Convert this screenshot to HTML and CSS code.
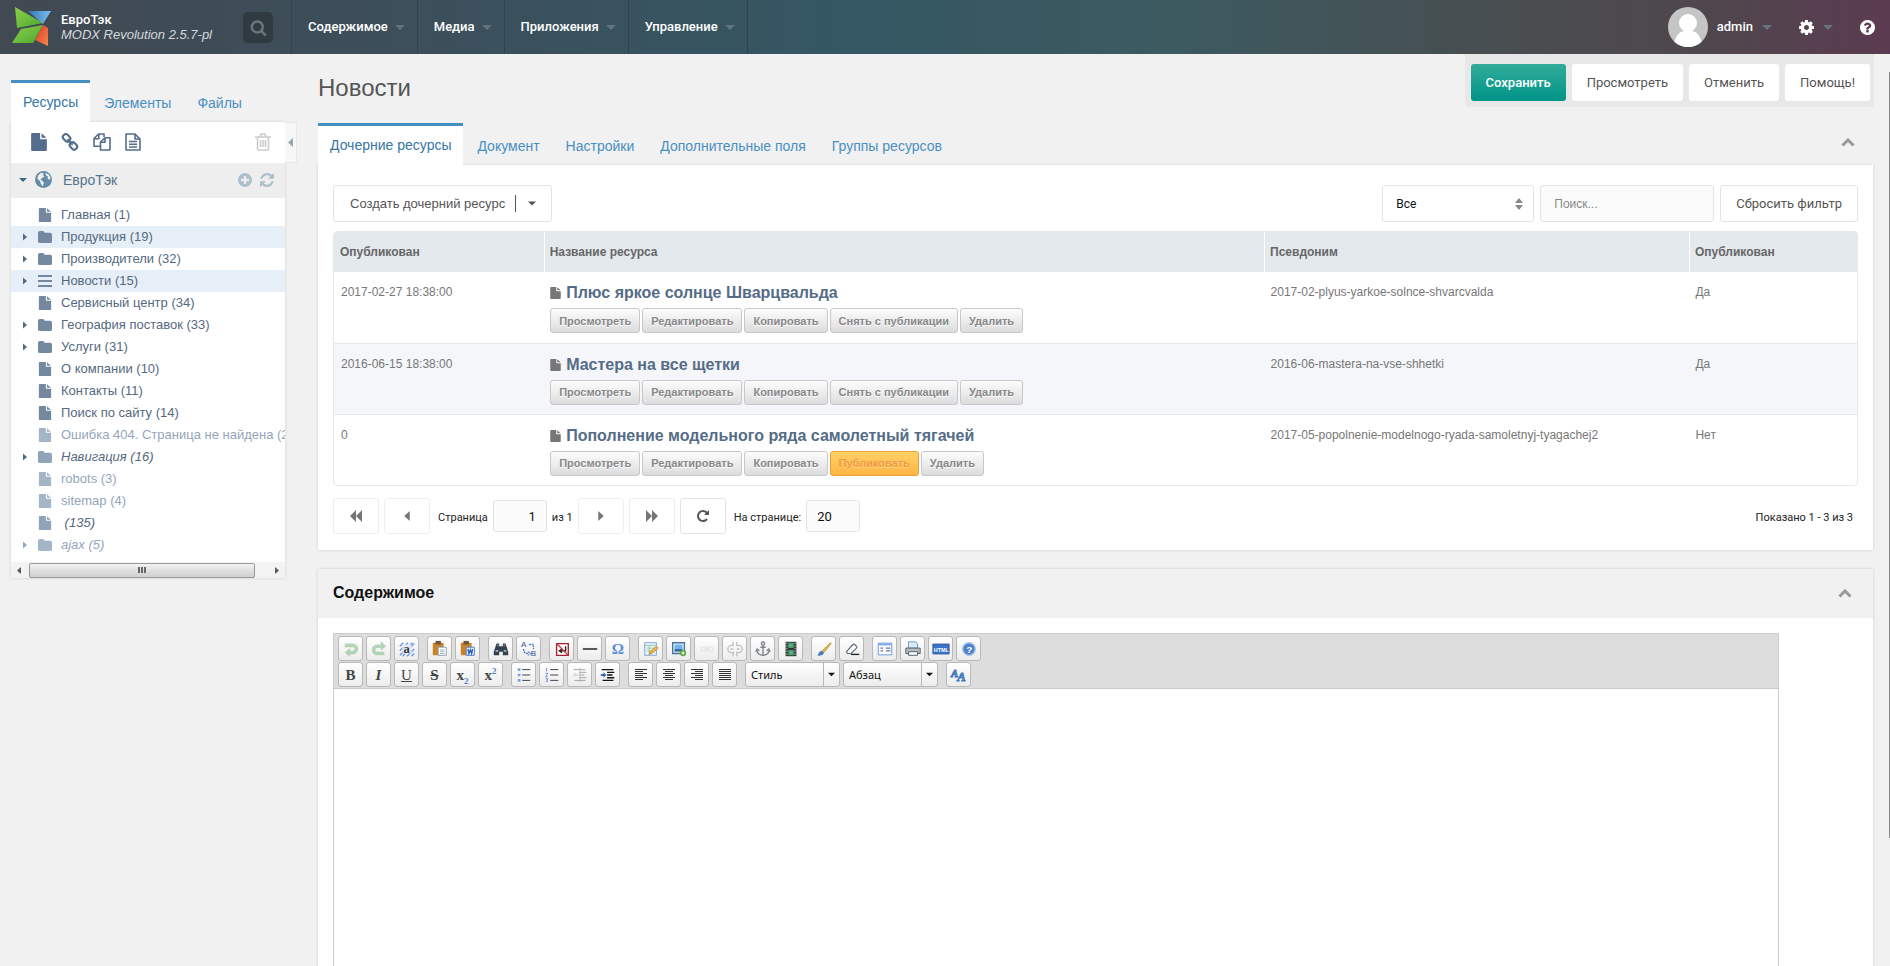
FILE: index.html
```html
<!DOCTYPE html>
<html lang="ru">
<head>
<meta charset="utf-8">
<title>Новости — ЕвроТэк</title>
<link rel="stylesheet" href="styles.css">
</head>
<body>
<svg class="sprite" aria-hidden="true">
  <symbol id="i-search" viewBox="0 0 1792 1792"><path d="M1216 832q0-185-131.5-316.5t-316.5-131.5-316.5 131.5-131.5 316.5 131.5 316.5 316.5 131.5 316.5-131.5 131.5-316.5zm512 832q0 52-38 90t-90 38q-54 0-90-38l-343-342q-179 124-399 124-143 0-273.5-55.5t-225-150-150-225-55.5-273.5 55.5-273.5 150-225 225-150 273.5-55.5 273.5 55.5 225 150 150 225 55.5 273.5q0 220-124 399l343 343q37 37 37 90z"/></symbol>
  <symbol id="i-cog" viewBox="128 128 1536 1536"><path d="M1152 896q0-106-75-181t-181-75-181 75-75 181 75 181 181 75 181-75 75-181zm512-109v222q0 12-8 23t-20 13l-185 28q-19 54-39 91 35 50 107 138 10 12 10 25t-9 23q-27 37-99 108t-94 71q-12 0-26-9l-138-108q-44 23-91 38-16 136-29 186-7 28-36 28h-222q-14 0-24.5-8.5t-11.5-21.5l-28-184q-49-16-90-37l-141 107q-10 9-25 9-14 0-25-11-126-114-165-168-7-10-7-23 0-12 8-23 15-21 51-66.5t54-70.5q-27-50-41-99l-183-27q-13-2-21-12.5t-8-23.5v-222q0-12 8-23t19-13l186-28q14-46 39-92-40-57-107-138-10-12-10-24 0-10 9-23 26-36 98.5-107.5t94.5-71.5q13 0 26 10l138 107q44-23 91-38 16-136 29-186 7-28 36-28h222q14 0 24.5 8.5t11.5 21.5l28 184q49 16 90 37l142-107q9-9 24-9 13 0 25 10 129 119 165 170 7 8 7 22 0 12-8 23-15 21-51 66.5t-54 70.5q26 50 41 98l183 28q13 2 21 12.5t8 23.5z"/></symbol>
  <symbol id="i-question" viewBox="128 128 1536 1536"><path d="M1024 1376v-192q0-14-9-23t-23-9h-192q-14 0-23 9t-9 23v192q0 14 9 23t23 9h192q14 0 23-9t9-23zm256-672q0-88-55.5-163t-138.5-116-170-41q-243 0-371 213-15 24 8 42l132 100q7 6 19 6 16 0 25-12 53-68 86-92 34-24 86-24 48 0 85.5 26t37.5 59q0 38-20 61t-68 45q-63 28-115.5 86.5t-52.5 125.5v36q0 14 9 23t23 9h192q14 0 23-9t9-23q0-19 21.5-49.5t54.5-49.5q32-18 49-28.5t46-35 44.5-48 28-60.5 12.5-81zm384 192q0 209-103 385.5t-279.5 279.5-385.5 103-385.5-103-279.5-279.5-103-385.5 103-385.5 279.5-279.5 385.5-103 385.5 103 279.5 279.5 103 385.5z"/></symbol>
  <symbol id="i-refresh" viewBox="128 128 1536 1536"><path d="M1639 1056q0 5-1 7-64 268-268 434.5t-478 166.5q-146 0-282.5-55t-243.5-157l-129 129q-19 19-45 19t-45-19-19-45v-448q0-26 19-45t45-19h448q26 0 45 19t19 45-19 45l-137 137q71 66 161 102t187 36q134 0 250-65t186-179q11-17 53-117 8-23 30-23h192q13 0 22.5 9.5t9.5 22.5zm25-800v448q0 26-19 45t-45 19h-448q-26 0-45-19t-19-45 19-45l138-138q-148-137-349-137-134 0-250 65t-186 179q-11 17-53 117-8 23-30 23h-199q-13 0-22.5-9.5t-9.5-22.5v-7q65-268 270-434.5t480-166.5q146 0 284 55.5t245 156.5l130-129q19-19 45-19t45 19 19 45z"/></symbol>
  <symbol id="i-plus" viewBox="128 128 1536 1536"><path d="M1344 960v-128q0-26-19-45t-45-19h-256v-256q0-26-19-45t-45-19h-128q-26 0-45 19t-19 45v256h-256q-26 0-45 19t-19 45v128q0 26 19 45t45 19h256v256q0 26 19 45t45 19h128q26 0 45-19t19-45v-256h256q26 0 45-19t19-45zm320-64q0 209-103 385.5t-279.5 279.5-385.5 103-385.5-103-279.5-279.5-103-385.5 103-385.5 279.5-279.5 385.5-103 385.5 103 279.5 279.5 103 385.5z"/></symbol>
  <symbol id="i-repeat" viewBox="128 128 1536 1536"><path d="M1664 256v448q0 26-19 45t-45 19h-448q-42 0-59-40-17-39 14-69l138-138q-148-137-349-137-104 0-198.5 40.5t-163.5 109.5-109.5 163.5-40.5 198.5 40.5 198.5 109.5 163.5 163.5 109.5 198.5 40.5q119 0 225-52t179-147q7-10 23-12 15 0 25 9l137 138q9 8 9.5 20.5t-7.5 22.5q-109 132-264 204.5t-327 72.5q-156 0-298-61t-245-164-164-245-61-298 61-298 164-245 245-164 298-61q147 0 284.5 55.5t244.5 156.5l130-129q29-31 70-14 39 17 39 59z"/></symbol>
  <symbol id="i-file" viewBox="0 0 14 16"><path d="M0 1a1 1 0 0 1 1-1h7v5.500h6V15a1 1 0 0 1-1 1H1a1 1 0 0 1-1-1zM9.300 0.200 13.700 4.300H9.300z"/></symbol>
  <symbol id="i-folder" viewBox="0 0 15 13"><path d="M0 2a2 2 0 0 1 2-2h3a2 2 0 0 1 2 2h6a2 2 0 0 1 2 2v7a2 2 0 0 1-2 2H2a2 2 0 0 1-2-2z"/></symbol>
  <symbol id="i-bars" viewBox="0 0 14 12"><path d="M0 0h14v2H0zM0 5h14v2H0zM0 10h14v2H0z"/></symbol>
  <symbol id="i-link" viewBox="0 0 17 17"><g fill="none" stroke="currentColor" stroke-width="2"><rect x="1.500" y="1.800" width="7.500" height="5.500" rx="2.600" transform="rotate(45 5.200 4.600)"/><rect x="8" y="9.500" width="7.500" height="5.500" rx="2.600" transform="rotate(45 11.800 12.200)"/><path d="M6 6l5 5"/></g></symbol>
  <symbol id="i-copy" viewBox="0 0 18 18"><g fill="none" stroke="currentColor" stroke-width="1.600" stroke-linejoin="round"><path d="M7 13.200H1V5.500L5.500 1H11v3M5.800 1v4.800H1M17 4.800V17H7.500V9L12 4.800zM12 4.800V9.200H7.500"/></g></symbol>
  <symbol id="i-filetext" viewBox="0 0 16 18"><g fill="none" stroke="currentColor" stroke-width="1.600" stroke-linejoin="round"><path d="M1 1h9l5 5v11H1zM10 1v5h5M4 8.500h8M4 11.200h8M4 14h8"/></g></symbol>
  <symbol id="i-trash" viewBox="0 0 16 18"><g fill="none" stroke="currentColor" stroke-width="1.600"><path d="M0 4h16M5 4l1-3h4l1 3M2.500 4v12q0 1 1 1h9q1 0 1-1V4M5.500 7v7M8 7v7M10.500 7v7"/></g></symbol>
  <symbol id="i-globe" viewBox="0 0 17 17"><circle cx="8.500" cy="8.500" r="8.500"/><path class="land" d="M3 4.500 6 1.800 9 2.500 8 4.500 9.500 5.500 7 7 5.500 8.500 7.500 10 9 12 7.500 15.500 6 13 5 10 2.500 8zM10.500 1.800 14 3.800 15.500 6.500 14.500 9 12.500 7.500 13 5.500 11 4.500z"/></symbol>
  <symbol id="i-up" viewBox="0 0 14 9"><path d="M1.500 7.500 7 2l5.500 5.500" fill="none" stroke="currentColor" stroke-width="3"/></symbol>
  <symbol id="i-down" viewBox="0 0 10 5"><path d="M0 0h10L5 5z"/></symbol>
  <symbol id="i-right" viewBox="0 0 5 9"><path d="M0 0v9l5-4.500z"/></symbol>
  <symbol id="i-left" viewBox="0 0 5 9"><path d="M5 0v9L0 4.500z"/></symbol>
  <symbol id="i-first" viewBox="0 0 12 12"><path d="M6 0v12L0 6zM12 0v12L6 6z"/></symbol>
  <symbol id="i-last" viewBox="0 0 12 12"><path d="M6 0v12l6-6zM0 0v12l6-6z"/></symbol>
  <symbol id="i-updown" viewBox="0 0 8 12"><path d="M0 5 4 0l4 5zM0 7l4 5 4-5z"/></symbol>
</svg>

<header class="topbar">
  <div class="brand">
    <svg class="logo" viewBox="0 0 40 40" aria-label="MODX">
      <defs>
        <linearGradient id="lg1" x1="0" y1="0" x2="1" y2="1"><stop offset="0" stop-color="#8fd04c"/><stop offset="1" stop-color="#4ba82e"/></linearGradient>
        <linearGradient id="lg2" x1="0" y1="0" x2="1" y2="0"><stop offset="0" stop-color="#2f74b8"/><stop offset="1" stop-color="#7cc0ee"/></linearGradient>
        <linearGradient id="lg3" x1="0" y1="0" x2="1" y2="1"><stop offset="0" stop-color="#d9372a"/><stop offset="1" stop-color="#f58a4b"/></linearGradient>
      </defs>
      <path d="M3 0 31 16 5 21z" fill="url(#lg1)"/><path d="M16 4H39L31 17z" fill="url(#lg2)"/>
      <path d="M9 22 31 18 21 36H0z" fill="url(#lg1)"/><path d="M31 18 36 21V39L23 33z" fill="url(#lg3)"/>
    </svg>
    <div class="brand-text"><strong>ЕвроТэк</strong><em>MODX Revolution 2.5.7-pl</em></div>
    <button class="search-btn" aria-label="Поиск"><svg><use href="#i-search"/></svg></button>
  </div>
  <nav class="menu">
    <a href="#">Содержимое <svg class="caret"><use href="#i-down"/></svg></a>
    <a href="#">Медиа <svg class="caret"><use href="#i-down"/></svg></a>
    <a href="#">Приложения <svg class="caret"><use href="#i-down"/></svg></a>
    <a href="#">Управление <svg class="caret"><use href="#i-down"/></svg></a>
  </nav>
  <nav class="user">
    <a href="#" class="profile"><svg class="avatar" viewBox="0 0 40 40"><defs><clipPath id="av"><circle cx="20" cy="20" r="20"/></clipPath></defs><g clip-path="url(#av)"><path fill="#c5c5c5" d="M0 0h40v40H0z"/><g fill="#fff"><circle cx="20" cy="16" r="9"/><path d="M5 42q2-16 10-18h10q8 2 10 18z"/></g></g></svg>admin <svg class="caret"><use href="#i-down"/></svg></a>
    <a href="#" class="settings" aria-label="Настройки"><svg class="ico15"><use href="#i-cog"/></svg><svg class="caret"><use href="#i-down"/></svg></a>
    <a href="#" aria-label="Справка"><svg class="ico15"><use href="#i-question"/></svg></a>
  </nav>
</header>

<div class="page">
  <aside class="sidebar">
    <nav class="tabs side-tabs"><a href="#" class="tab active">Ресурсы</a><a href="#" class="tab">Элементы</a><a href="#" class="tab">Файлы</a></nav>
    <div class="side-panel">
      <button class="collapse" aria-label="Свернуть"><svg><use href="#i-left"/></svg></button>
      <div class="side-tools">
        <button aria-label="Документ"><svg class="w16"><use href="#i-file"/></svg></button>
        <button aria-label="Ссылка"><svg class="w18"><use href="#i-link"/></svg></button>
        <button aria-label="Копия"><svg class="w18"><use href="#i-copy"/></svg></button>
        <button aria-label="Файл"><svg class="w16"><use href="#i-filetext"/></svg></button>
        <button class="trash" aria-label="Корзина"><svg class="w16"><use href="#i-trash"/></svg></button>
      </div>
      <div class="root"><svg class="caret"><use href="#i-down"/></svg><svg class="globe"><use href="#i-globe"/></svg><span>ЕвроТэк</span><button aria-label="Добавить"><svg><use href="#i-plus"/></svg></button><button aria-label="Обновить"><svg><use href="#i-refresh"/></svg></button></div>
      <ul class="tree">
        <li><i></i><svg><use href="#i-file"/></svg><a href="#">Главная (1)</a></li>
        <li class="sel"><i><svg><use href="#i-right"/></svg></i><svg><use href="#i-folder"/></svg><a href="#">Продукция (19)</a></li>
        <li><i><svg><use href="#i-right"/></svg></i><svg><use href="#i-folder"/></svg><a href="#">Производители (32)</a></li>
        <li class="sel"><i><svg><use href="#i-right"/></svg></i><svg><use href="#i-bars"/></svg><a href="#">Новости (15)</a></li>
        <li><i></i><svg><use href="#i-file"/></svg><a href="#">Сервисный центр (34)</a></li>
        <li><i><svg><use href="#i-right"/></svg></i><svg><use href="#i-folder"/></svg><a href="#">География поставок (33)</a></li>
        <li><i><svg><use href="#i-right"/></svg></i><svg><use href="#i-folder"/></svg><a href="#">Услуги (31)</a></li>
        <li><i></i><svg><use href="#i-file"/></svg><a href="#">О компании (10)</a></li>
        <li><i></i><svg><use href="#i-file"/></svg><a href="#">Контакты (11)</a></li>
        <li><i></i><svg><use href="#i-file"/></svg><a href="#">Поиск по сайту (14)</a></li>
        <li class="off"><i></i><svg><use href="#i-file"/></svg><a href="#">Ошибка 404. Страница не найдена (2)</a></li>
        <li class="hid"><i><svg><use href="#i-right"/></svg></i><svg><use href="#i-folder"/></svg><a href="#">Навигация (16)</a></li>
        <li class="off"><i></i><svg><use href="#i-file"/></svg><a href="#">robots (3)</a></li>
        <li class="off"><i></i><svg><use href="#i-file"/></svg><a href="#">sitemap (4)</a></li>
        <li class="hid"><i></i><svg><use href="#i-file"/></svg><a href="#">&nbsp;(135)</a></li>
        <li class="off hid"><i><svg><use href="#i-right"/></svg></i><svg><use href="#i-folder"/></svg><a href="#">ajax (5)</a></li>
      </ul>
      <div class="hscroll"><svg><use href="#i-left"/></svg><div class="track"><div class="thumb"><span></span></div></div><svg><use href="#i-right"/></svg></div>
    </div>
  </aside>

  <main class="main">
    <div class="main-head">
      <h1>Новости</h1>
      <div class="actions"><button class="btn primary">Сохранить</button><button class="btn">Просмотреть</button><button class="btn">Отменить</button><button class="btn">Помощь!</button></div>
    </div>
    <nav class="tabs main-tabs"><a href="#" class="tab active">Дочерние ресурсы</a><a href="#" class="tab">Документ</a><a href="#" class="tab">Настройки</a><a href="#" class="tab">Дополнительные поля</a><a href="#" class="tab">Группы ресурсов</a><button class="fold" aria-label="Свернуть"><svg><use href="#i-up"/></svg></button></nav>
    <section class="panel grid-panel">
      <div class="filters">
        <button class="btn line create">Создать дочерний ресурс<svg><use href="#i-down"/></svg></button>
        <div class="combo"><select aria-label="Фильтр"><option>Все</option></select><svg><use href="#i-updown"/></svg></div>
        <input class="field find" type="text" placeholder="Поиск..." aria-label="Поиск">
        <button class="btn line reset">Сбросить фильтр</button>
      </div>
      <div class="grid">
      <table>
        <colgroup><col class="c1"><col class="c2"><col class="c3"><col class="c4"></colgroup>
        <thead><tr><th>Опубликован</th><th>Название ресурса</th><th>Псевдоним</th><th>Опубликован</th></tr></thead>
        <tbody>
          <tr><td>2017-02-27 18:38:00</td><td><a href="#" class="name"><svg><use href="#i-file"/></svg>Плюс яркое солнце Шварцвальда</a><div class="row-btns"><button>Просмотреть</button><button>Редактировать</button><button>Копировать</button><button>Снять с публикации</button><button>Удалить</button></div></td><td>2017-02-plyus-yarkoe-solnce-shvarcvalda</td><td>Да</td></tr>
          <tr><td>2016-06-15 18:38:00</td><td><a href="#" class="name"><svg><use href="#i-file"/></svg>Мастера на все щетки</a><div class="row-btns"><button>Просмотреть</button><button>Редактировать</button><button>Копировать</button><button>Снять с публикации</button><button>Удалить</button></div></td><td>2016-06-mastera-na-vse-shhetki</td><td>Да</td></tr>
          <tr><td>0</td><td><a href="#" class="name"><svg><use href="#i-file"/></svg>Пополнение модельного ряда самолетный тягачей</a><div class="row-btns"><button>Просмотреть</button><button>Редактировать</button><button>Копировать</button><button class="publish">Публиковать</button><button>Удалить</button></div></td><td>2017-05-popolnenie-modelnogo-ryada-samoletnyj-tyagachej2</td><td>Нет</td></tr>
        </tbody>
      </table>
      </div>
      <div class="paging">
        <button class="pg" disabled aria-label="Первая"><svg class="p12"><use href="#i-first"/></svg></button>
        <button class="pg" disabled aria-label="Предыдущая"><svg class="p9"><use href="#i-left"/></svg></button>
        <label for="pn">Страница</label><input id="pn" class="field num right" type="text" value="1"><span>из 1</span>
        <button class="pg" disabled aria-label="Следующая"><svg class="p9"><use href="#i-right"/></svg></button>
        <button class="pg" disabled aria-label="Последняя"><svg class="p12"><use href="#i-last"/></svg></button>
        <button class="pg" aria-label="Обновить"><svg class="p12"><use href="#i-repeat"/></svg></button>
        <label for="ps" class="per">На странице:</label><input id="ps" class="field num" type="text" value="20">
        <span class="shown">Показано 1 - 3 из 3</span>
      </div>
    </section>

    <section class="panel content-panel">
      <div class="panel-head"><h2>Содержимое</h2><button class="fold" aria-label="Свернуть"><svg><use href="#i-up"/></svg></button></div>
      <div class="editor">
        <div class="ed-tools">
          <div class="ed-row">
            <div class="grp">
              <button class="dim" aria-label="Отменить"><svg viewBox="0 0 20 20"><path d="M3 6h9a4 4 0 0 1 0 8H8" fill="none" stroke="#7fba87" stroke-width="4"/><path d="M9 9v10l-6-5z" fill="#7fba87"/></svg></button>
              <button class="dim" aria-label="Повторить"><svg viewBox="0 0 20 20"><path d="M13 7H8a3.500 3.500 0 0 0 0 8h8" fill="none" stroke="#7fba87" stroke-width="4"/><path d="M12 1v11l6-5z" fill="#7fba87"/></svg></button>
              <button aria-label="Выделить всё"><svg viewBox="0 0 20 20"><path d="M2 7l4-4M2 12l9-9M2 17l5-5M13 6l3-3M5 18l3-3M10 18l8-8M15 18l3-3M14 8l4-4" stroke="#6c92e6" stroke-width="1.500"/><path d="M5 5h10v10H5z" fill="#e3ebfb"/><text x="6" y="14" class="gl" font-size="14">a</text></svg></button>
            </div>
            <div class="grp">
              <button aria-label="Вставить"><svg viewBox="0 0 20 20"><rect x="2" y="3" width="12" height="14" rx="1" fill="#c98328"/><rect x="5" y="1" width="6" height="4" fill="#6d5740"/><path d="M8 8h9v9H8z" fill="#fff" stroke="#8c9bb5"/><path d="M10 11h5M10 13h5M10 15h5" stroke="#9aa"/></svg></button>
              <button aria-label="Вставить из Word"><svg viewBox="0 0 20 20"><rect x="2" y="3" width="12" height="14" rx="1" fill="#c98328"/><rect x="5" y="1" width="6" height="4" fill="#6d5740"/><path d="M8 8h9v9H8z" fill="#e5efff" stroke="#4977c6"/><path d="M10 10l1 5 1.500-4 1.500 4 1-5" fill="none" stroke="#2c60bd" stroke-width="1.500"/></svg></button>
            </div>
            <div class="grp">
              <button aria-label="Найти"><svg viewBox="0 0 20 20"><path d="M5 4h3v3h4V4h3l3 9v4h-6v-4H8v4H2v-4z" fill="#35414c"/><path d="M4 12h3M13 12h3M6 6h1M13 6h1" stroke="#9cb2c4" stroke-width="2"/></svg></button>
              <button aria-label="Заменить"><svg viewBox="0 0 20 20"><text x="1" y="8" font-size="9" class="gs">A</text><text x="12" y="18" font-size="9" class="gs">B</text><path d="M4 10c0 5 3 5 6 5M10 5h5v5M9 13l3 2-3 2" fill="none" stroke="#4b76ce" stroke-width="1.500" stroke-dasharray="2 1"/></svg></button>
            </div>
            <div class="grp">
              <button aria-label="Перенос"><svg viewBox="0 0 20 20"><path d="M4 4h13v13H4z" fill="#fff" stroke="#a32430" stroke-width="1.500"/><path d="M14 7v5H8M10 10l-3 2 3 2" fill="none" stroke="#222" stroke-width="1.500"/><path d="M4 4l13 13" stroke="#c23b48" stroke-width="1.500"/></svg></button>
              <button aria-label="Линия"><svg viewBox="0 0 20 20"><path d="M2 10h16" stroke="#111" stroke-width="1.500"/></svg></button>
              <button aria-label="Символ"><svg viewBox="0 0 20 20"><text x="3" y="16" font-size="17" class="om">Ω</text></svg></button>
            </div>
            <div class="grp">
              <button aria-label="Стили"><svg viewBox="0 0 20 20"><path d="M3 3h13v14H3z" fill="#e9f2fc" stroke="#7ba2d4"/><path d="M3 6h13M5 9h9M5 12h7M8 6v10" stroke="#9fc39f"/><path d="M8 16l1-3 7-6 2 2-7 6z" fill="#f2b74c" stroke="#a56f1c" stroke-width=".7"/></svg></button>
              <button aria-label="Картинка"><svg viewBox="0 0 20 20"><path d="M3 3h13v12H3z" fill="#eef4fb" stroke="#47719f" stroke-width="1.500"/><path d="M5 5h9v5H5z" fill="#73b4ee"/><path d="M5 10h9v3H5z" fill="#3d6f9d"/><circle cx="14.500" cy="14.500" r="3.500" fill="#57a63f"/><path d="M12.500 14.500h4M14.500 12.500v4" stroke="#fff"/></svg></button>
              <button class="dim" aria-label="Ссылка"><svg viewBox="0 0 20 20"><path d="M4 8h5v4H4zM11 8h5v4h-5zM7 10h6" fill="none" stroke="#ddd" stroke-width="1.500"/></svg></button>
              <button class="dim" aria-label="Убрать ссылку"><svg viewBox="0 0 20 20"><path d="M8 6H6a4 4 0 0 0 0 8h2M12 6h2a4 4 0 0 1 0 8h-2M8 2v5M12 13v5M12 2v5M8 13v5M5 10h3M12 10h3" fill="none" stroke="#999" stroke-width="1.500"/></svg></button>
              <button aria-label="Якорь"><svg viewBox="0 0 20 20"><circle cx="10" cy="4" r="1.800" fill="none" stroke="#7d838a" stroke-width="1.500"/><path d="M10 6v11M7 8h6M3 11c1 5 4 6 7 6s6-1 7-6M2 13l1.500-3L6 12M18 13l-1.500-3L14 12" fill="none" stroke="#7d838a" stroke-width="1.500"/></svg></button>
              <button aria-label="Видео"><svg viewBox="0 0 20 20"><path d="M4 2h12v16H4z" fill="#30363a"/><path d="M7 3h6v6H7zM7 11h6v6H7z" fill="#4aa75c"/><path d="M8 5h3v2H8zM9 13h3v2H9z" fill="#5db1dd"/><path d="M5.500 3v14M14.500 3v14" stroke="#ddd" stroke-dasharray="1.500 1.500"/></svg></button>
            </div>
            <div class="grp">
              <button aria-label="Очистить"><svg viewBox="0 0 20 20"><path d="M8 12 17 3l1 1-8 10z" fill="#e6bb55" stroke="#a88330" stroke-width=".7"/><path d="M2 17c2 0 2-4 5-5l3 2c0 3-4 4-8 3z" fill="#4a7db5"/></svg></button>
              <button aria-label="Ластик"><svg viewBox="0 0 20 20"><path d="M4 13 11 5q1-1 2 0l2 2q1 1 0 2l-6 6H5z" fill="#fff" stroke="#5d6b80" stroke-width="1.300"/><path d="M9 16h9" stroke="#222" stroke-width="1.500"/></svg></button>
            </div>
            <div class="grp">
              <button aria-label="Поля"><svg viewBox="0 0 20 20"><path d="M2.500 3.500h15v13h-15z" fill="#fff" stroke="#5d8ed4"/><path d="M3 5h14" stroke="#7aa8e8" stroke-width="2"/><path d="M5 9h3M5 12h3M11 9h5M11 12h5" stroke="#5d78a0" stroke-width="1.500"/></svg></button>
              <button aria-label="Печать"><svg viewBox="0 0 20 20"><path d="M5 9V2h8l2 2v5z" fill="#d8e9fb" stroke="#6d93c0"/><path d="M2 9h16v6H2z" fill="#b7bcc4" stroke="#50565d"/><path d="M5 13h10v4H5z" fill="#fff" stroke="#50565d"/></svg></button>
              <button aria-label="HTML"><svg viewBox="0 0 20 20"><path d="M1 4.500h18v11H1z" fill="#3c74c8" stroke="#2756a0"/><text x="2" y="13" class="ht" font-size="6">HTML</text></svg></button>
              <button aria-label="Помощь"><svg viewBox="0 0 20 20"><circle cx="10" cy="10" r="7" fill="#4d84cc" stroke="#aac6ea" stroke-width="1.500"/><text x="7" y="14" font-size="11" class="hq">?</text></svg></button>
            </div>
          </div>
          <div class="ed-row">
            <div class="grp letters">
              <button><b>B</b></button><button><i>I</i></button><button class="thin"><u>U</u></button><button><s>S</s></button><button>x<sub>2</sub></button><button>x<sup>2</sup></button>
            </div>
            <div class="grp">
              <button aria-label="Список"><svg viewBox="0 0 20 20"><path d="M3 4h3M3 10h3M3 16h3" stroke="#7d9fdb" stroke-width="3"/><path d="M8 4h9M8 10h9M8 16h9" stroke="#333"/></svg></button>
              <button aria-label="Нумерация"><svg viewBox="0 0 20 20"><path d="M4 2v4M3 8h2v1L3 12h2M3 14h2v3H3" stroke="#5d86d0" fill="none"/><path d="M8 4h9M8 10h9M8 16h9" stroke="#333"/></svg></button>
              <button class="dim" aria-label="Меньше отступ"><svg viewBox="0 0 20 20"><path d="M3 4h13M9 7h8M9 10h6M9 13h8M4 16h12" stroke="#555"/><path d="M8 10H3m2-2-2 2 2 2M10 2v16" stroke="#6d88b0" fill="none" stroke-dasharray="2 1"/></svg></button>
              <button aria-label="Больше отступ"><svg viewBox="0 0 20 20"><path d="M3 4h13M9 7h8M9 10h6M9 13h8M4 16h12" stroke="#111" stroke-width="1.500"/><path d="M2 10h5" stroke="#2c5fc0" stroke-width="2"/><path d="M5 7v6l3-3z" fill="#2c5fc0"/></svg></button>
            </div>
            <div class="grp">
              <button aria-label="Влево"><svg viewBox="0 0 18 18"><path d="M3 3.500h12M3 5.500h8M3 7.500h12M3 9.500h8M3 11.500h12M3 13.500h8" stroke="#333"/></svg></button>
              <button aria-label="По центру"><svg viewBox="0 0 18 18"><path d="M3 3.500h12M5 5.500h8M3 7.500h12M5 9.500h8M3 11.500h12M5 13.500h8" stroke="#333"/></svg></button>
              <button aria-label="Вправо"><svg viewBox="0 0 18 18"><path d="M3 3.500h12M7 5.500h8M3 7.500h12M7 9.500h8M3 11.500h12M7 13.500h8" stroke="#333"/></svg></button>
              <button aria-label="По ширине"><svg viewBox="0 0 18 18"><path d="M3 3.500h12M3 5.500h12M3 7.500h12M3 9.500h12M3 11.500h12M3 13.500h12" stroke="#333"/></svg></button>
            </div>
            <div class="grp">
              <div class="ed-sel"><select aria-label="Стиль"><option>Стиль</option></select><svg><use href="#i-down"/></svg></div>
              <div class="ed-sel"><select aria-label="Абзац"><option>Абзац</option></select><svg><use href="#i-down"/></svg></div>
            </div>
            <div class="grp"><button aria-label="Атрибуты"><svg viewBox="0 0 20 20"><text x="1" y="12" font-size="12" class="aa">A</text><text x="8" y="17" font-size="14" class="aa">A</text></svg></button></div>
          </div>
        </div>
        <textarea class="ed-body" aria-label="Содержимое"></textarea>
      </div>
    </section>
  </main>
</div>
</body>
</html>
```
FILE: styles.css
```css
* { box-sizing: border-box; }
html, body { height: 100%; }
body {
  margin: 0;
  display: flex;
  flex-direction: column;
  overflow: hidden;
  background: #f1f1f1;
  color: #555;
  font: 13px/18px "Liberation Sans", Arial, sans-serif;
}
a { color: inherit; text-decoration: none; }
button, input, select { font: inherit; color: inherit; margin: 0; }
button { border: 0; padding: 0; background: none; cursor: pointer; }
svg { fill: currentColor; flex: none; display: block; }
.sprite { position: absolute; width: 0; height: 0; }
.caret { width: 10px; height: 5px; }

/* top bar */
.topbar {
  display: flex;
  flex: none;
  height: 54px;
  color: #fff;
  background: linear-gradient(90deg, #414952 0%, #3c4f5b 22%, #345763 45%, #3c5a60 62%, #4a4c4e 82%, #4f474d 90%, #5b3b50 100%);
}
.brand { display: flex; align-items: center; width: 292px; padding: 0 18px 0 12px; border-right: 1px solid #2f424d; }
.logo { width: 40px; height: 40px; }
.brand-text { flex: 1; margin-left: 9px; line-height: 15px; white-space: nowrap; }
.brand-text strong, .brand-text em { display: block; }
.brand-text strong { font-family: Roboto, sans-serif; font-weight: 500; }
.brand-text em { color: #d5d9dc; }
.search-btn { width: 30px; height: 31px; border-radius: 5px; background: #303a41; color: #6a757d; display: grid; place-items: center; }
.search-btn svg { width: 17px; height: 17px; }
.menu { display: flex; font: 500 13px/18px Roboto, sans-serif; }
.menu a { display: flex; align-items: center; gap: 7px; padding: 0 12px 0 16px; border-right: 1px solid #2f4450; }
.topbar .caret { color: #64747e; }
.user { display: flex; align-items: center; margin-left: auto; padding-right: 15px; font: 500 13px/18px Roboto, sans-serif; }
.profile, .settings { display: flex; align-items: center; gap: 9px; margin-right: 27px; }
.avatar { width: 40px; height: 40px; }
.ico15 { width: 15px; height: 15px; }

/* layout */
.page { display: flex; flex: 1; min-height: 0; padding: 0 17px 0 11px; gap: 33px; }
.page::after { content: ""; position: fixed; right: 0; top: 72px; bottom: 128px; width: 1px; background: #8a8a8a; }
.sidebar { width: 274px; flex: none; padding-top: 26px; }
.main { flex: 1; min-width: 0; display: flex; flex-direction: column; }

/* tabs */
.tabs { display: flex; height: 42px; font-size: 14px; color: #4a8fc1; }
.tab { display: flex; align-items: center; border-top: 3px solid transparent; padding: 0 13px; white-space: nowrap; }
.tab.active { position: relative; z-index: 1; background: #fff; border-top-color: #4590c0; padding: 0 12px 2px; margin-right: 1px; color: #3876a5; }
.fold { margin-left: auto; color: #999; }
.fold svg { width: 14px; height: 9px; }
.main-tabs .fold { padding: 0 18px 3px 0; }

/* sidebar tree */
.side-panel { position: relative; background: #fff; box-shadow: 0 0 3px rgba(0,0,0,.14); }
.collapse { position: absolute; left: 100%; top: 0; width: 12px; height: 41px; background: #f7f7f7; border: 1px solid #e8e8e8; border-left: 0; color: #9aa5ae; display: grid; place-items: center; }
.collapse svg { width: 5px; height: 9px; }
.side-tools { display: flex; align-items: center; gap: 14px; height: 41px; padding: 0 14px 2px 20px; color: #556d8c; }
.side-tools svg { height: 18px; }
.w16 { width: 16px; }
.w18 { width: 18px; }
.trash { margin-left: auto; color: #ccc; }
.root { display: flex; align-items: center; height: 35px; padding: 0 11px 2px 8px; background: #eee; color: #55758c; font-size: 14px; }
.root .caret { width: 8px; height: 4px; color: #3b6a85; }
.globe { width: 17px; height: 17px; margin: 0 11px 0 8px; color: #648ba5; }
.land { fill: #eee; }
.root span { flex: 1; }
.root button { margin-left: 8px; color: #adc0ca; }
.root button svg { width: 14px; height: 14px; }
.tree { list-style: none; margin: 0; padding: 6px 0; overflow: hidden; color: #556980; }
.tree li { display: flex; align-items: center; height: 22px; white-space: nowrap; }
.tree li.sel { background: #e6eef7; }
.tree i { width: 27px; padding-left: 12px; flex: none; }
.tree i svg { width: 4px; height: 8px; }
.tree li > svg { width: 14px; height: 14px; margin-right: 9px; color: #74889f; }
.tree .off { color: #93a6bb; }
.tree .off > svg { color: #a4b5c8; }
.tree .hid > svg { color: #8fa3b9; }
.tree .off.hid > svg { color: #a4b5c8; }
.tree .hid a { font-style: italic; }
.hscroll { display: flex; align-items: center; height: 16px; padding: 0 6px; background: #f3f3f3; color: #555; gap: 7px; }
.hscroll svg { width: 4px; height: 7px; }
.track { flex: 1; }
.thumb { display: grid; place-items: center; width: 94%; height: 15px; margin-left: 1px; border: 1px solid #999; border-radius: 2px; background: linear-gradient(#f3f3f3, #e0e0e0 50%, #cfcfcf); }
.thumb span { width: 8px; height: 6px; background: repeating-linear-gradient(90deg, #666 0 2px, transparent 2px 3px); }

/* page heading */
.main-head { display: flex; justify-content: space-between; align-items: flex-start; margin-bottom: 16px; }
h1 { margin: 20px 0 0; font-size: 24px; line-height: 28px; font-weight: 400; color: #555; }
.actions { display: flex; gap: 6px; padding: 10px 4px 6px 6px; margin-right: -1px; background: #e8e8e8; border-radius: 0 0 4px 4px; }
.btn { height: 37px; padding: 0 15px; border-radius: 3px; background: #fff; color: #555; font: 13px/18px Roboto, sans-serif; white-space: nowrap; }
.primary { background: linear-gradient(#32ab9a, #009588); color: #fff; font-weight: 500; }
.line { border: 1px solid #e4e4e4; }

/* panels */
.panel { background: #fff; box-shadow: 0 0 3px rgba(0,0,0,.14); }
.grid-panel { padding: 20px 15px 16px; }
.filters { display: flex; margin-bottom: 9px; }
.create { display: flex; align-items: center; padding: 0 15px 0 16px; font: 13px/18px "Liberation Sans", sans-serif; }
.create svg { box-sizing: content-box; width: 8px; height: 5px; padding: 6px 0 6px 12px; margin-left: 10px; border-left: 1px solid #555; }
.combo { position: relative; margin-left: auto; width: 152px; }
.combo select { appearance: none; width: 100%; height: 37px; padding: 0 13px; border: 1px solid #e4e4e4; border-radius: 3px; background: #fff; color: #111; font: 12px/18px Roboto, sans-serif; }
.combo svg { position: absolute; right: 11px; top: 13px; width: 8px; height: 12px; color: #888; }
.field { height: 37px; padding: 0 13px; border: 1px solid #e4e4e4; border-radius: 3px; background: #fbfbfb; font: 12px/18px "Liberation Sans", sans-serif; }
.find { width: 174px; margin: 0 6px; }
.find::placeholder { color: #888; opacity: 1; }
.grid { border: 1px solid #e4e9ec; border-radius: 4px; overflow: hidden; }
table { width: 100%; table-layout: fixed; border-collapse: collapse; font-size: 12px; }
.c1 { width: 13.8%; } .c2 { width: 47.3%; } .c3 { width: 27.9%; } .c4 { width: 11%; }
th { height: 40px; padding: 0 5px 1px; text-align: left; background: #e4e9ee; color: #666; border-left: 1px solid #fff; }
th:first-child { border-left: 0; padding-left: 6px; }
td { height: 71px; padding: 11px 6px 0; vertical-align: top; border-top: 1px solid #e4e9ec; color: #777; }
td:first-child { padding-left: 7px; }
tbody tr:first-child td { border-top: 0; }
tbody tr:nth-child(2) { background: #f4f6f9; }
.name { display: flex; align-items: center; gap: 5px; font: bold 16px/20px "Liberation Sans", sans-serif; color: #556c88; }
.name svg { width: 11px; height: 12px; color: #777; }
.row-btns { display: flex; gap: 2px; margin-top: 5px; }
.row-btns button { height: 25px; padding: 0 8px; border: 1px solid #c8c8c8; border-radius: 3px; background: linear-gradient(#fdfdfd, #dcdcdc); color: #888; font: bold 11px/16px "Liberation Sans", sans-serif; text-shadow: 0 1px 0 #fff; }
.row-btns .publish { background: linear-gradient(#ffd067, #ffb542); border-color: #e8a33d; color: #ee9a42; text-shadow: 0 1px 0 #ffdc96; }

/* paging */
.paging { display: flex; align-items: center; gap: 5px; margin-top: 12px; color: #222; font: 11px/16px Roboto, sans-serif; }
.pg { width: 46px; height: 36px; border: 1px solid #e4e4e4; border-radius: 3px; color: #555; display: grid; place-items: center; }
.pg:disabled { border-color: #eee; color: #777; }
.p12 { width: 12px; height: 12px; }
.p9 { width: 6px; height: 10px; }
.paging label, .paging span { padding-top: 3px; }
.paging label { padding-left: 3px; }
.num { width: 54px; height: 32px; padding: 0 10px; color: #111; font: 13px/18px Roboto, sans-serif; }
.right { text-align: right; }
.shown { margin-left: auto; padding-right: 5px; }

/* content editor */
.content-panel { flex: 1; min-height: 0; display: flex; flex-direction: column; margin-top: 19px; }
.panel-head { display: flex; align-items: center; flex: none; height: 49px; padding: 0 21px 1px 15px; background: #f1f1f1; }
h2 { margin: 0; color: #111; font: bold 16px/20px "Liberation Sans", sans-serif; }
.editor { flex: 1; display: flex; flex-direction: column; width: 93%; margin: 15px 15px 0; border: 1px solid #ccc; border-bottom: 0; }
.ed-tools { padding: 2px 4px 0; background: #ddd; border-bottom: 1px solid #ccc; }
.ed-row { display: flex; gap: 8px; margin-bottom: 1px; }
.grp { display: flex; gap: 3px; }
.ed-row button { display: grid; place-items: center; width: 25px; height: 25px; border: 1px solid #b8b8b8; border-radius: 3px; background: linear-gradient(#fff, #ececec); }
.ed-row button svg { width: 18px; height: 18px; }
.ed-row .dim svg { opacity: .55; }
.ed-row .letters button { display: block; font: bold 15px/22px "Liberation Serif", serif; color: #444; text-align: center; }
.ed-row .letters .thin { font-weight: 400; }
.letters sub, .letters sup { font-size: 9px; line-height: 0; color: #4f7fd0; }
.gl { font-family: "Liberation Serif", serif; font-weight: bold; fill: #333; }
.gs { font-family: "Liberation Sans", sans-serif; fill: #35549a; }
.om { font-family: "Liberation Serif", serif; font-weight: bold; fill: #5b8ed8; }
.ht { font-family: "Liberation Sans", sans-serif; font-weight: bold; fill: #fff; }
.hq { font-family: "Liberation Sans", sans-serif; font-weight: bold; fill: #fff; }
.aa { font-family: "Liberation Serif", serif; font-style: italic; font-weight: bold; fill: #6ba1e2; stroke: #3e73bd; stroke-width: 1px; }
.ed-sel { position: relative; display: flex; width: 95px; height: 25px; border: 1px solid #b8b8b8; border-radius: 3px; background: linear-gradient(#fff, #ececec); color: #111; }
.ed-sel select { appearance: none; flex: 1; border: 0; padding: 0 5px; background: none; font: 11px/16px "Noto Sans", sans-serif; }
.ed-sel svg { position: absolute; right: 0; top: 0; width: 16px; height: 23px; padding: 9px 4px; border-left: 1px solid #b8b8b8; }
.ed-body { flex: 1; width: 100%; border: 0; resize: none; background: #fff; }
```
